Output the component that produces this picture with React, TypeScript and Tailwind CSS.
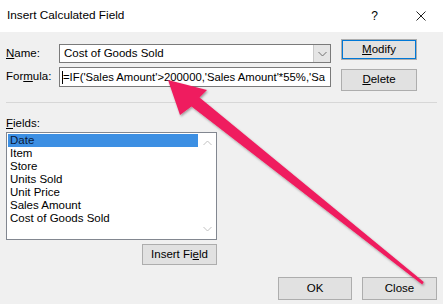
import React from 'react';

const ITEMS = ['Date', 'Item', 'Store', 'Units Sold', 'Unit Price', 'Sales Amount', 'Cost of Goods Sold'];

const btn =
  'flex items-center justify-center bg-[#e1e1e1] border border-[#adadad] text-[11.5px] text-black';

const Chevron: React.FC<{ up?: boolean; color?: string }> = ({ up, color = '#c2c2c2' }) => (
  <svg width="9" height="6" viewBox="0 0 9 6">
    <path d={up ? 'M0.5 5 L4.5 1 L8.5 5' : 'M0.5 1 L4.5 5 L8.5 1'} fill="none" stroke={color} strokeWidth="1" />
  </svg>
);

const App: React.FC = () => {
  return (
    <div
      className="relative w-[443px] h-[304px] overflow-hidden bg-[#f0f0f0] text-black"
      style={{ fontFamily: '"Liberation Sans", Arial, sans-serif' }}
    >
      {/* title bar */}
      <div className="h-[32px] bg-white flex items-center pl-[7px] pr-[17px]">
        <span className="text-[11.8px]">Insert Calculated Field</span>
        <span className="ml-auto text-[12px] mr-[38px]">?</span>
        <svg width="10" height="10" viewBox="0 0 10 10">
          <path d="M0.5 0.5 L9.5 9.5 M9.5 0.5 L0.5 9.5" stroke="#222" strokeWidth="1" />
        </svg>
      </div>

      <div className="px-[6px] text-[11.5px]">
        {/* name / formula + buttons */}
        <div className="flex pt-[7px]">
          <div className="w-[325px] mt-[5px] flex flex-col gap-[4px]">
            <div className="flex items-center">
              <span className="w-[53px]">
                <span className="underline">N</span>ame:
              </span>
              <div className="w-[272px] h-[19px] bg-white border border-[#7a7a7a] flex">
                <span className="flex-1 pl-[4px] leading-[17px]">Cost of Goods Sold</span>
                <div className="w-[17px] h-full bg-[#e5e5e5] border-l border-[#c9c9c9] flex items-center justify-center">
                  <Chevron color="#707070" />
                </div>
              </div>
            </div>
            <div className="flex items-center">
              <span className="w-[53px]">
                For<span className="underline">m</span>ula:
              </span>
              <div className="w-[272px] h-[20px] bg-white border border-[#7a7a7a] flex items-center overflow-hidden whitespace-nowrap pl-[2px]">
                <span className="w-px h-[13px] bg-black" />
                <span className="text-[11.3px]">=IF('Sales Amount'&gt;200000,'Sales Amount'*55%,'Sa</span>
              </div>
            </div>
          </div>
          <div className="ml-[10px] w-[76px] flex flex-col gap-[9px]">
            <div className={`${btn} h-[21px] border-[#0078d7] outline outline-1 outline-[#0078d7] outline-offset-[-2px]`}>
              <span>
                <span className="underline">M</span>odify
              </span>
            </div>
            <div className={`${btn} h-[22px]`}>
              <span>
                <span className="underline">D</span>elete
              </span>
            </div>
          </div>
        </div>

        <div className="mt-[11px] h-px bg-[#d7d7d7]" />

        {/* fields list */}
        <div className="mt-[13px] leading-[14px]">
          <span className="underline">F</span>ields:
        </div>
        <div className="w-[211px]">
          <div className="mt-[2px] h-[108px] bg-white border border-[#828790] flex">
            <div className="flex-1 p-px">
              {ITEMS.map((it, i) => (
                <div
                  key={it}
                  className={`h-[13px] leading-[13px] pl-[2px] ${i === 0 ? 'bg-[#3c8fe3] text-[#0a1a3a]' : ''}`}
                >
                  {it}
                </div>
              ))}
            </div>
            <div className="w-[17px] flex flex-col items-center justify-between py-[7px]">
              <Chevron up />
              <Chevron />
            </div>
          </div>
          <div className="flex justify-end mt-[4px]">
            <div className={`${btn} w-[75px] h-[21px]`}>
              <span>
                Insert Fi<span className="underline">e</span>ld
              </span>
            </div>
          </div>
        </div>

        {/* bottom buttons */}
        <div className="flex justify-end gap-[10px] mt-[12px]">
          <div className={`${btn} w-[74px] h-[23px]`}>OK</div>
          <div className={`${btn} w-[75px] h-[23px]`}>Close</div>
        </div>
      </div>

      {/* annotation arrow */}
      <svg className="absolute inset-0 pointer-events-none" width="443" height="304" viewBox="0 0 443 304">
        <defs>
          <filter id="sh" x="-10%" y="-10%" width="120%" height="120%">
            <feDropShadow dx="1" dy="1.5" stdDeviation="1.2" floodColor="#000" floodOpacity="0.35" />
          </filter>
        </defs>
        <polygon
          points="168,80 207,90 199.5,97.5 423.8,282 422.2,284.5 191.5,106.5 180,115"
          fill="#ef1d5e"
          filter="url(#sh)"
        />
      </svg>
    </div>
  );
};

export default App;
